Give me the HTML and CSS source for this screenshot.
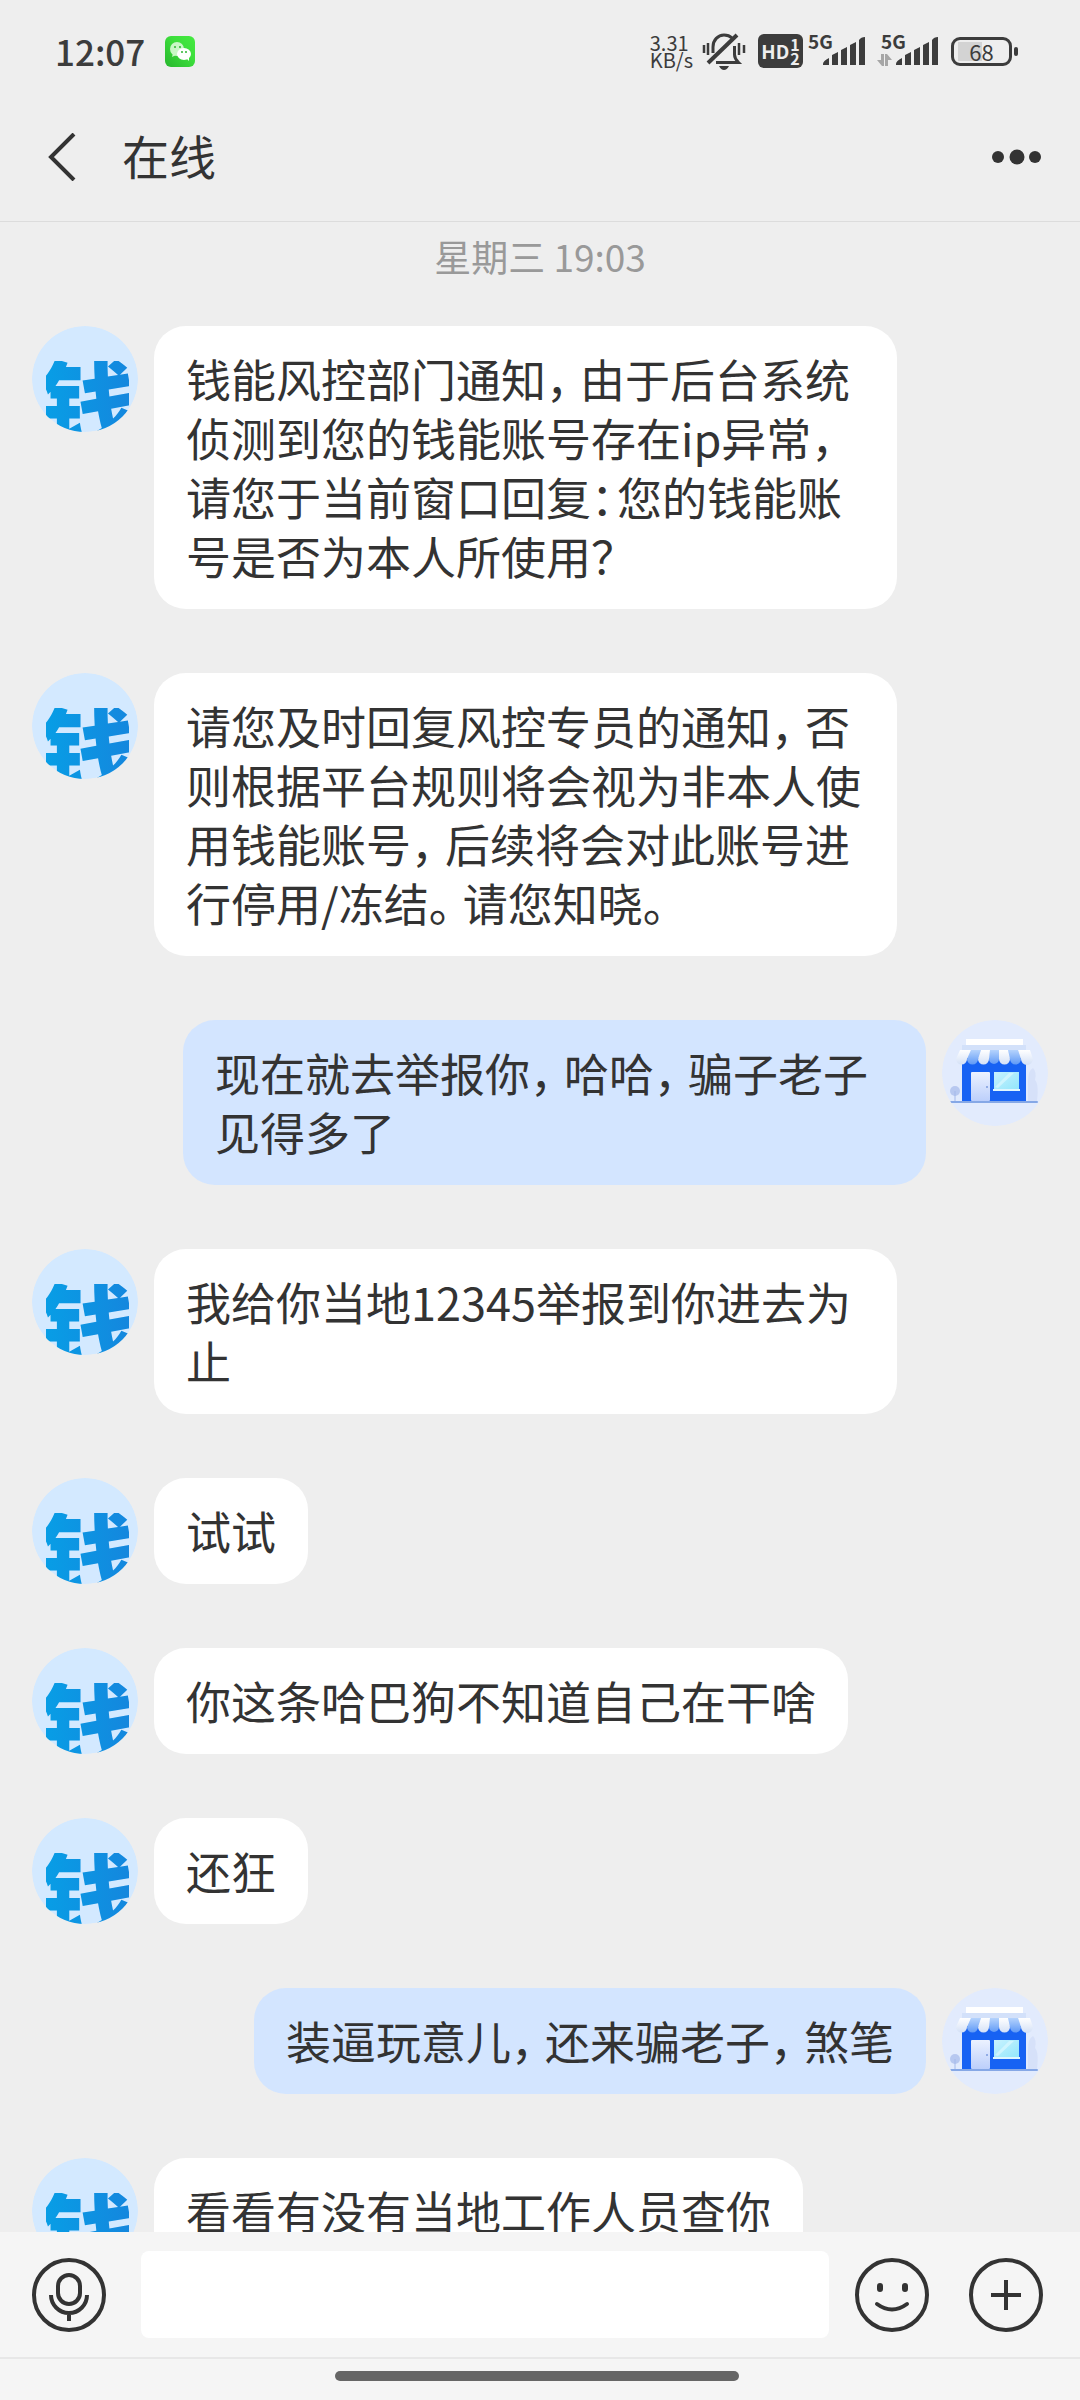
FILE: index.html
```
<!DOCTYPE html>
<html lang="zh-CN">

<head>
    <meta charset="UTF-8">
    <meta name="viewport" content="width=device-width, initial-scale=1.0">
    <title>在线</title>
    <link rel="stylesheet" href="styles.css">
</head>

<body>
    <!-- Shared avatars -->
    <svg class="defs" aria-hidden="true">
        <defs>
            <linearGradient id="awning" x1="0" y1="0" x2="0" y2="1">
                <stop offset="0" stop-color="#ffffff" />
                <stop offset="1" stop-color="#d3e0f6" />
            </linearGradient>
            <linearGradient id="awningBlue" x1="0" y1="0" x2="0" y2="1">
                <stop offset="0" stop-color="#b5d3fd" />
                <stop offset="1" stop-color="#5f99f6" />
            </linearGradient>
            <linearGradient id="door" x1="0" y1="0" x2="0" y2="1">
                <stop offset="0" stop-color="#ecf2ff" />
                <stop offset="1" stop-color="#bccffb" />
            </linearGradient>
            <linearGradient id="glass" x1="0" y1="0" x2="1" y2="1">
                <stop offset="0" stop-color="#c9f3ff" />
                <stop offset="1" stop-color="#93e6fb" />
            </linearGradient>
            <linearGradient id="ink" x1="0" y1="0" x2="1" y2="0">
                <stop offset="0" stop-color="#079fe6" />
                <stop offset="1" stop-color="#1585dd" />
            </linearGradient>
            <clipPath id="crop">
                <rect x="14" y="35" width="83" height="71" />
            </clipPath>
        </defs>
        <symbol id="agent" viewBox="0 0 106 106">
            <circle cx="53" cy="53" r="53" fill="#d3e9ff" />
            <text x="8" y="115" font-size="96" font-weight="900" fill="url(#ink)" clip-path="url(#crop)">钱</text>
        </symbol>
        <symbol id="store" viewBox="0 0 106 106">
            <circle cx="53" cy="53" r="53" fill="#e2ebfd" />
            <path d="M86 81V62q0-12 5-14 4 4 2 12 4 4 2 21z" fill="#d6e1f9" />
            <rect x="24" y="19" width="57" height="7" fill="#fff" />
            <rect x="20" y="25" width="64" height="5" fill="#d3e1fa" />
            <rect x="20" y="38" width="64" height="43" fill="#1762f3" />
            <path d="M18 30h11l-4 9a5 5 0 0 1-11 0zM39 30h9l-1 9a5 5 0 0 1-11 0zM57 30h9l2 9a5 5 0 0 1-11 0zM76 30h12l3 9a5 5 0 0 1-12 0z" fill="url(#awning)" />
            <path d="M29 30h10l-3 9a5 5 0 0 1-11 0zM48 30h9v9a5 5 0 0 1-10 0zM66 30h10l3 9a5 5 0 0 1-11 0z" fill="url(#awningBlue)" />
            <rect x="29" y="52" width="19" height="29" rx="1" fill="url(#door)" />
            <circle cx="45" cy="67" r="1" fill="#7c9bdc" />
            <rect x="52" y="52" width="25" height="17" fill="url(#glass)" />
            <path d="M53 67l14-14h5l-16 15z" fill="#e3faff" opacity=".6" />
            <rect x="51" y="69" width="27" height="2" fill="#dff6ff" />
            <circle cx="13" cy="71" r="5" fill="#b7c8f0" />
            <path d="M13 71v10" stroke="#a4b9ea" stroke-width="1" />
            <rect x="8" y="81" width="88" height="2" rx="1" fill="#86a8e6" />
        </symbol>
    </svg>

    <div class="status">
        <span class="clock">12:07</span>
        <svg class="wechat" width="30" height="31" viewBox="0 0 30 31">
            <defs>
                <linearGradient id="green" x1="0" y1="1" x2="1" y2="0">
                    <stop offset="0" stop-color="#27b62d" />
                    <stop offset=".6" stop-color="#3ddf3c" />
                    <stop offset="1" stop-color="#45ea40" />
                </linearGradient>
            </defs>
            <rect width="30" height="31" rx="6" fill="url(#green)" />
            <path d="M8 17l-1 4 4-2z" fill="#c9f7c6" />
            <ellipse cx="12" cy="13" rx="7" ry="7" fill="#c9f7c6" />
            <ellipse cx="19" cy="18" rx="7" ry="6" fill="#fff" />
            <path d="M21 22l3 3v-4z" fill="#fff" />
            <circle cx="10" cy="11" r="1" fill="#2bb52f" />
            <circle cx="15" cy="11" r="1" fill="#2bb52f" />
            <circle cx="17" cy="16" r="1" fill="#2bb52f" />
            <circle cx="21" cy="16" r="1" fill="#2bb52f" />
        </svg>
        <div class="speed">3.31<br>KB/s</div>
        <svg class="bell" width="44" height="37" viewBox="0 0 44 37">
            <g fill="none" stroke="#3c3c3c" stroke-width="3">
                <path d="M11 20v-6c0-7 5-12 11-12 3 0 6 1 8 3" />
                <path d="M14 29.500h22.500c-3-3-4-5-4-8V13" />
                <path d="M6 30L35 2" stroke-width="4" />
                <path d="M2 12v8M6 10v12M37 10v12M42 12v8" stroke-width="2.500" />
            </g>
            <path d="M17 33h10q-2 4-5 4t-5-4z" fill="#3c3c3c" />
        </svg>
        <div class="hd"><b>HD</b><span>1<br>2</span></div>
        <div class="signal">
            <b>5G</b>
            <svg width="44" height="29" viewBox="0 0 44 29" fill="#3c3c3c">
                <path d="M1 27q0-3 6-6v7H1zM10 18l6-3v13h-6zM19 13l6-3v18h-6zM28 8l6-3v23h-6zM37 3q2-3 6-3v28h-6z" />
            </svg>
        </div>
        <div class="signal data">
            <b>5G</b>
            <svg class="arrows" width="15" height="12" viewBox="0 0 15 12" fill="#a6a6a6">
                <path d="M4 0h3v12H5L0 6h4zM8 0h2l5 6h-4v6H8z" />
            </svg>
            <svg width="44" height="29" viewBox="0 0 44 29" fill="#3c3c3c">
                <path d="M1 27q0-3 6-6v7H1zM10 18l6-3v13h-6zM19 13l6-3v18h-6zM28 8l6-3v23h-6zM37 3q2-3 6-3v28h-6z" />
            </svg>
        </div>
        <div class="battery"><span>68</span></div>
    </div>

    <header class="header">
        <button class="icon-btn" aria-label="返回">
            <svg width="28" height="48" viewBox="0 0 28 48" fill="none" stroke="#333" stroke-width="4">
                <path d="M26 1L3 24l23 23" />
            </svg>
        </button>
        <h1>在线</h1>
        <button class="icon-btn more" aria-label="更多">
            <svg width="50" height="16" viewBox="0 0 50 16" fill="#333">
                <circle cx="6" cy="8" r="6" />
                <circle cx="25" cy="8" r="7.500" />
                <circle cx="43" cy="8" r="6" />
            </svg>
        </button>
    </header>

    <main class="chat">
        <time class="date">星期三 19:03</time>
        <div class="row">
            <svg class="avatar"><use href="#agent" /></svg>
            <p class="bubble">钱能风控部门通知<span class="punct">，</span>由于后台系统侦测到您的钱能账号存在ip异常<span class="punct">，</span>请您于当前窗口回复<span class="punct colon">：</span>您的钱能账号是否为本人所使用？</p>
        </div>
        <div class="row">
            <svg class="avatar"><use href="#agent" /></svg>
            <p class="bubble">请您及时回复风控专员的通知<span class="punct">，</span>否则根据平台规则将会视为非本人使用钱能账号<span class="punct">，</span>后续将会对此账号进行停用/冻结<span class="punct">。</span>请您知晓。</p>
        </div>
        <div class="row me">
            <svg class="avatar"><use href="#store" /></svg>
            <p class="bubble">现在就去举报你<span class="punct">，</span>哈哈<span class="punct">，</span>骗子老子见得多了</p>
        </div>
        <div class="row">
            <svg class="avatar"><use href="#agent" /></svg>
            <p class="bubble">我给你当地12345举报到你进去为止</p>
        </div>
        <div class="row">
            <svg class="avatar"><use href="#agent" /></svg>
            <p class="bubble">试试</p>
        </div>
        <div class="row">
            <svg class="avatar"><use href="#agent" /></svg>
            <p class="bubble">你这条哈巴狗不知道自己在干啥</p>
        </div>
        <div class="row">
            <svg class="avatar"><use href="#agent" /></svg>
            <p class="bubble">还狂</p>
        </div>
        <div class="row me">
            <svg class="avatar"><use href="#store" /></svg>
            <p class="bubble">装逼玩意儿<span class="punct">，</span>还来骗老子<span class="punct">，</span>煞笔</p>
        </div>
        <div class="row">
            <svg class="avatar"><use href="#agent" /></svg>
            <p class="bubble">看看有没有当地工作人员查你</p>
        </div>
    </main>

    <footer class="composer">
        <button class="icon-btn" aria-label="语音">
            <svg width="76" height="76" viewBox="0 0 76 76" fill="none" stroke="#333" stroke-width="4">
                <circle cx="38" cy="38" r="35" />
                <rect x="27" y="18" width="22" height="29" rx="11" />
                <path d="M20 38a18 18 0 0 0 36 0M38 56v8" />
            </svg>
        </button>
        <input type="text" aria-label="消息">
        <button class="icon-btn" aria-label="表情">
            <svg width="76" height="76" viewBox="0 0 76 76" fill="none" stroke="#333" stroke-width="4" stroke-linecap="round">
                <circle cx="38" cy="38" r="35" />
                <path d="M26 29v3M51 29v3" stroke-width="6" />
                <path d="M23 47q15 11 30 0" />
            </svg>
        </button>
        <button class="icon-btn plus" aria-label="更多功能">
            <svg width="76" height="76" viewBox="0 0 76 76" fill="none" stroke="#333" stroke-width="4">
                <circle cx="38" cy="38" r="35" />
                <path d="M38 23v30M23 38h30" />
            </svg>
        </button>
    </footer>
    <div class="home"><i></i></div>
</body>

</html>
```
FILE: styles.css
```
* {
    box-sizing: border-box;
}

body {
    margin: 0;
    height: 100vh;
    display: flex;
    flex-direction: column;
    background-color: #eeeeee;
    color: #333;
    font-family: "Noto Sans CJK SC", sans-serif;
}

.defs {
    position: absolute;
    width: 0;
    height: 0;
}

svg {
    display: block;
}

/* Status bar */
.status {
    display: flex;
    align-items: center;
    flex-shrink: 0;
    height: 102px;
    padding: 0 68px 0 55px;
    color: #3c3c3c;
}

.clock {
    font-size: 35px;
    font-weight: 500;
    line-height: 40px;
}

.wechat {
    margin-left: 20px;
}

.speed {
    margin-left: auto;
    font-size: 20px;
    line-height: 17px;
}

.bell {
    margin-left: 9px;
}

.hd {
    display: flex;
    align-items: center;
    justify-content: center;
    gap: 1px;
    width: 45px;
    height: 34px;
    margin-left: 12px;
    border-radius: 6px;
    background-color: #3c3c3c;
    color: #eeeeee;
    font-size: 19px;
    line-height: 34px;
}

.hd span {
    font-size: 16px;
    font-weight: 700;
    line-height: 14px;
}

.signal {
    position: relative;
    height: 29px;
    margin-left: 5px;
    padding-left: 14px;
}

.signal b {
    position: absolute;
    top: -4px;
    left: 0;
    font-size: 19px;
    line-height: 16px;
}

.data {
    margin-left: 11px;
    padding-left: 18px;
}

.data b {
    left: 4px;
}

.arrows {
    position: absolute;
    left: 0;
    bottom: 0;
}

.battery {
    position: relative;
    width: 61px;
    height: 29px;
    margin-left: 12px;
    border: 3px solid #3c3c3c;
    border-radius: 9px;
    background: linear-gradient(#d3d3d3, #d3d3d3) 4px 2px / 24px 19px no-repeat;
    font-size: 22px;
    line-height: 23px;
    text-align: center;
}

.battery::after {
    content: "";
    position: absolute;
    top: 7px;
    right: -9px;
    width: 4px;
    height: 9px;
    border-radius: 2px;
    background-color: #3c3c3c;
}

/* Header */
.header {
    display: flex;
    align-items: center;
    flex-shrink: 0;
    height: 120px;
    padding: 0 38px 10px 48px;
    border-bottom: 1px solid #dcdcdc;
}

.header h1 {
    margin: 0 0 4px 46px;
    font-size: 47px;
    font-weight: 400;
    line-height: 60px;
}

.icon-btn {
    padding: 0;
    border: none;
    background: none;
    cursor: pointer;
}

.more {
    margin-left: auto;
}

/* Messages */
.chat {
    display: flex;
    flex-direction: column;
    flex: 1;
    gap: 64px;
    min-height: 0;
    padding: 16px 32px 0;
    overflow: hidden;
}

.date {
    height: 24px;
    color: #999;
    font-size: 37px;
    line-height: 36px;
    text-align: center;
}

.row {
    display: flex;
    align-items: flex-start;
    flex-shrink: 0;
    gap: 16px;
}

.me {
    flex-direction: row-reverse;
}

.avatar {
    flex-shrink: 0;
    width: 106px;
    height: 106px;
    border-radius: 50%;
    overflow: hidden;
}

.bubble {
    max-width: calc(100% - 273px);
    margin: 0;
    padding: 23px 32px 24px;
    border-radius: 32px;
    background-color: #fff;
    font-size: 45px;
    line-height: 59px;
}

.me .bubble {
    background-color: #d3e5ff;
}

/* Full-width marks take less room than a whole character */
.punct {
    margin-right: -11px;
}

.colon {
    margin-right: -19px;
}

/* Composer */
.composer {
    display: flex;
    align-items: center;
    flex-shrink: 0;
    height: 127px;
    padding: 0 36px 0 31px;
    border-bottom: 2px solid #e7e7e7;
    background-color: #f5f5f5;
}

.composer input {
    flex: 1;
    min-width: 0;
    height: 87px;
    margin: 0 25px 0 34px;
    padding: 0 24px;
    border: none;
    border-radius: 8px;
    background-color: #fff;
    font-family: inherit;
    font-size: 45px;
}

.plus {
    margin-left: 38px;
}

.home {
    display: flex;
    justify-content: center;
    flex-shrink: 0;
    height: 41px;
    padding: 12px 7px 0 0;
    background-color: #f5f5f5;
}

.home i {
    width: 404px;
    height: 10px;
    border-radius: 5px;
    background-color: #666;
}
```
